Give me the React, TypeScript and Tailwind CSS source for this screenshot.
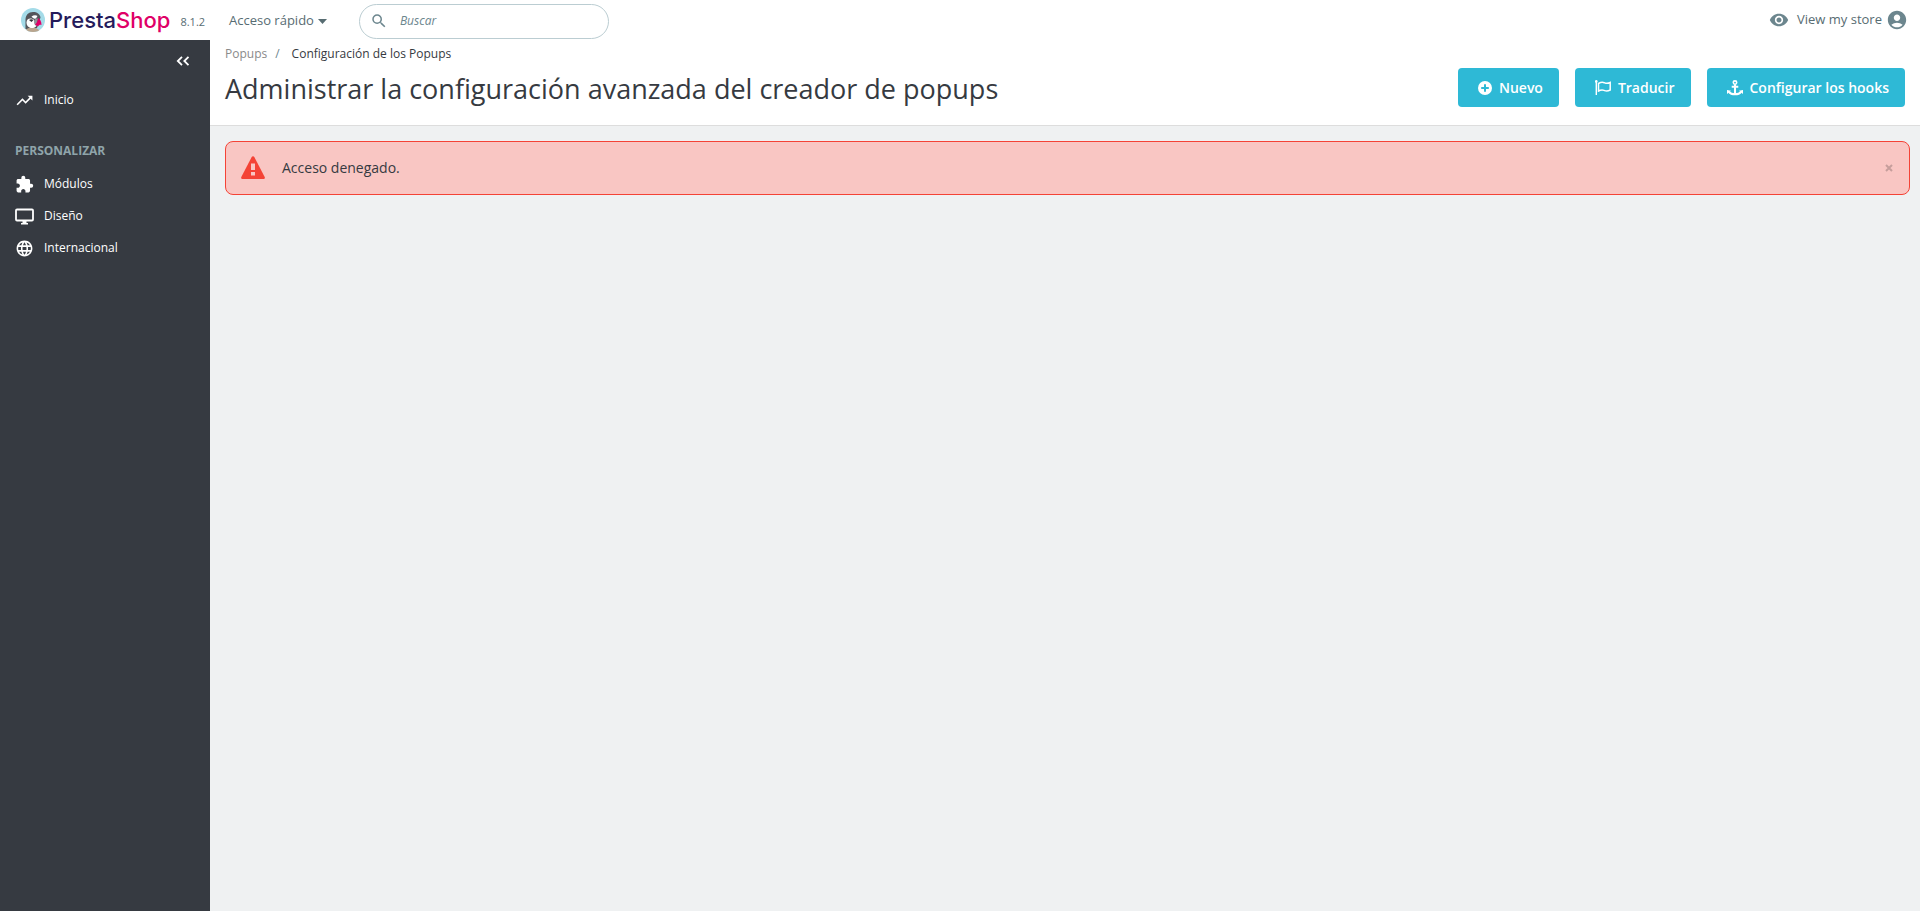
import React from "react";
import {
    MdAccountCircle,
    MdExtension,
    MdLanguage,
    MdRemoveRedEye,
    MdSearch,
    MdTrendingUp,
} from "react-icons/md";

const MonitorIcon = ({ className }: { className?: string }) => (
    <svg viewBox="0 0 19 19" className={className} aria-hidden="true">
        <rect x="1" y="2.500" width="17" height="11" rx="1" fill="none" stroke="currentColor" strokeWidth="1.800" />
        <path d="M7.500 14h4v2H13v1.500H6V16h1.500z" fill="currentColor" />
    </svg>
);

const menuItems = [
    { label: "Módulos", icon: MdExtension },
    { label: "Diseño", icon: MonitorIcon },
    { label: "Internacional", icon: MdLanguage },
];

const PuffinLogo = () => (
    <svg viewBox="0 0 48 48" className="size-6 shrink-0" aria-hidden="true">
        <clipPath id="puffin-clip">
            <circle cx="24" cy="24" r="24" />
        </clipPath>
        <g clipPath="url(#puffin-clip)">
            <rect width="48" height="48" fill="#a4dbe8" />
            <path d="M9 42V23C9 14 15 8 24 8c8 0 14 4 15 11l-7 21-10 4z" fill="#54555a" />
            <path d="M8 48c1-6 6-9 14-9s14 3 17 9z" fill="#baa58e" />
            <path d="M11 29c0-5 3-8 8-8 3 0 5 1 7 3l5 10-1 3c-3 2-5 3-8 3-7 0-11-5-11-11z" fill="#fff" />
            <path d="M21 17c4-3 9-3 12-1l-3 5c-4 1-7-1-9-4z" fill="#fff" />
            <path d="M16 24c3-2 6-2 9 0l-4 4z" fill="#33343a" />
            <path d="M26 27c1-5 4-7 8-6l-3 15c-4-2-5-5-5-9z" fill="#8d9398" />
            <path d="M34 20c4 2 7 7 7 14-3-1-5 0-7 3l-6-4c3-2 6-7 6-13z" fill="#df0067" />
        </g>
    </svg>
);

const PlusIcon = () => (
    <svg viewBox="0 0 14 14" className="size-3.5" aria-hidden="true">
        <circle cx="7" cy="7" r="7" fill="currentColor" />
        <path d="M7 3.2v7.6M3.2 7h7.6" stroke="#2eb9d6" strokeWidth="2" />
    </svg>
);

const FlagIcon = () => (
    <svg viewBox="0 0 16 15" className="h-[15px] w-4" fill="none" stroke="currentColor" aria-hidden="true">
        <path d="M1.300 1v14" strokeWidth="1.4" />
        <circle cx="1.300" cy="1.400" r="1.300" fill="currentColor" stroke="none" />
        <path d="M3.500 3.500c3.500-2 4.500-1.300 6.200-.6s3.500.6 5.500-.4v7.500c-2 1-3.800 1.300-5.500.6s-2.700-1.600-6.200.4z" strokeWidth="1.500" />
    </svg>
);

const AnchorIcon = () => (
    <svg viewBox="0 0 17 17" className="size-4" fill="none" stroke="currentColor" aria-hidden="true">
        <circle cx="8.500" cy="2.700" r="1.800" strokeWidth="1.700" />
        <path d="M8.500 4.500V15M5 7.200h7" strokeWidth="2.200" />
        <path d="M2 12.500c1.500 2 4 2.700 6.500 2.700s5-.7 6.500-2.700" strokeWidth="2.200" />
        <path d="M0 10.500v4.500l4.300-3.500zM17 10.500v4.500l-4.300-3.500z" fill="currentColor" stroke="none" />
    </svg>
);

const WarningIcon = () => (
    <svg viewBox="0 0 24 24" className="size-6 shrink-0 text-[#f44336]" aria-hidden="true">
        <path
            d="M10.700 1c.6-1 2-1 2.600 0l10.400 20c.5 1-.2 2-1.300 2H1.600c-1.100 0-1.800-1-1.300-2z"
            fill="currentColor"
        />
        <path d="M10 7.500h4V14h-4zM10 16h4v3.500h-4z" fill="#f9c6c3" />
    </svg>
);

const actionClass =
    "flex h-[39px] cursor-pointer items-center gap-[7px] rounded bg-[#2eb9d6] pl-5 pr-4 text-sm font-semibold text-white hover:bg-[#25a0ba]";

const Header = () => (
    <header className="flex h-10 items-center bg-white text-[13px] text-[#576c72]">
        <a href="#inicio" className="flex w-[210px] items-center pl-[21px]">
            <PuffinLogo />
            <span className="ml-1 font-[Inter] text-[22px] leading-6 font-medium text-[#251b5b]">
                Presta<span className="text-[#df0067]">Shop</span>
            </span>
            <span className="ml-2.5 pt-1 text-[11px] leading-4">8.1.2</span>
        </a>
        <button type="button" className="ml-[19px] flex cursor-pointer items-center gap-1 pt-0.5">
            Acceso rápido
            <svg viewBox="0 0 9 5" className="h-[5px] w-[9px]" aria-hidden="true">
                <path d="M0 0h9L4.500 5z" fill="currentColor" />
            </svg>
        </button>
        <form className="mt-0.5 ml-8 flex h-[35px] w-[250px] items-center rounded-full border border-[#bbcdd2] pl-2.5">
            <MdSearch className="size-4.5 text-[#6c868e]" />
            <input
                type="text"
                aria-label="Buscar"
                placeholder="Buscar"
                className="ml-3 min-w-0 flex-1 text-xs italic outline-none placeholder:text-[#6c868e]"
            />
        </form>
        <div className="ml-auto flex items-center pr-3">
            <a href="#tienda" className="flex items-center gap-2">
                <MdRemoveRedEye className="size-5 text-[#6c868e]" />
                View my store
            </a>
            <button type="button" aria-label="Cuenta" className="ml-1 cursor-pointer text-[#6c868e]">
                <MdAccountCircle className="size-[22px]" />
            </button>
        </div>
    </header>
);

const Sidebar = () => (
    <nav className="w-[210px] shrink-0 bg-[#363a41] text-xs font-medium text-white">
        <div className="flex justify-end pt-3 pr-5">
            <button type="button" aria-label="Contraer menú" className="cursor-pointer">
                <svg viewBox="0 0 14 10" className="my-1 h-2.5 w-3.5" fill="none" stroke="currentColor" strokeWidth="1.800" aria-hidden="true">
                    <path d="M6 .8 1.800 5 6 9.200M12.500.8 8.300 5l4.200 4.200" />
                </svg>
            </button>
        </div>
        <a href="#inicio" className="mt-3.5 flex h-8 items-center gap-2.5 pl-[15px]">
            <MdTrendingUp className="size-[19px]" />
            Inicio
        </a>
        <h2 className="mt-[27px] pl-[15px] leading-4 font-bold text-[#8fa4aa]">PERSONALIZAR</h2>
        <ul className="mt-[9px]">
            {menuItems.map(({ label, icon: Icon }) => (
                <li key={label}>
                    <a href={`#${label}`} className="flex h-8 items-center gap-2.5 pl-[15px]">
                        <Icon className="size-[19px]" />
                        {label}
                    </a>
                </li>
            ))}
        </ul>
    </nav>
);

const App = () => {
    return (
        <div className="flex min-h-screen flex-col bg-[#eff1f2] font-['Open_Sans',sans-serif] text-[#363a41]">
            <Header />
            <div className="flex flex-1">
                <Sidebar />
                <main className="min-w-0 flex-1">
                    <div className="flex h-[86px] items-start justify-between border-b border-[#dddddd] bg-white px-[15px]">
                        <div>
                            <nav aria-label="Ruta" className="mt-1 flex text-xs leading-5">
                                <a href="#popups" className="text-[#8a8a8a]">Popups</a>
                                <span className="mr-3 ml-2 text-[#6c868e]">/</span>
                                <span>Configuración de los Popups</span>
                            </nav>
                            <h1 className="mt-[5px] text-[27px] leading-10">
                                Administrar la configuración avanzada del creador de popups
                            </h1>
                        </div>
                        <div className="mt-7 flex gap-4">
                            <button type="button" className={actionClass}>
                                <PlusIcon />
                                Nuevo
                            </button>
                            <button type="button" className={actionClass}>
                                <FlagIcon />
                                Traducir
                            </button>
                            <button type="button" className={actionClass}>
                                <AnchorIcon />
                                Configurar los hooks
                            </button>
                        </div>
                    </div>
                    <div
                        role="alert"
                        className="mt-[15px] mr-2.5 ml-[15px] flex h-[54px] items-center rounded-lg border border-[#f44336] bg-[#f9c6c3] pr-4 pl-[15px] text-sm"
                    >
                        <WarningIcon />
                        <p className="ml-[17px]">Acceso denegado.</p>
                        <button type="button" aria-label="Cerrar" className="ml-auto cursor-pointer text-[#c69e9c]">
                            <svg viewBox="0 0 8 8" className="size-2" stroke="currentColor" strokeWidth="2" aria-hidden="true">
                                <path d="M1 1l6 6M7 1 1 7" />
                            </svg>
                        </button>
                    </div>
                </main>
            </div>
        </div>
    );
};

export default App;
